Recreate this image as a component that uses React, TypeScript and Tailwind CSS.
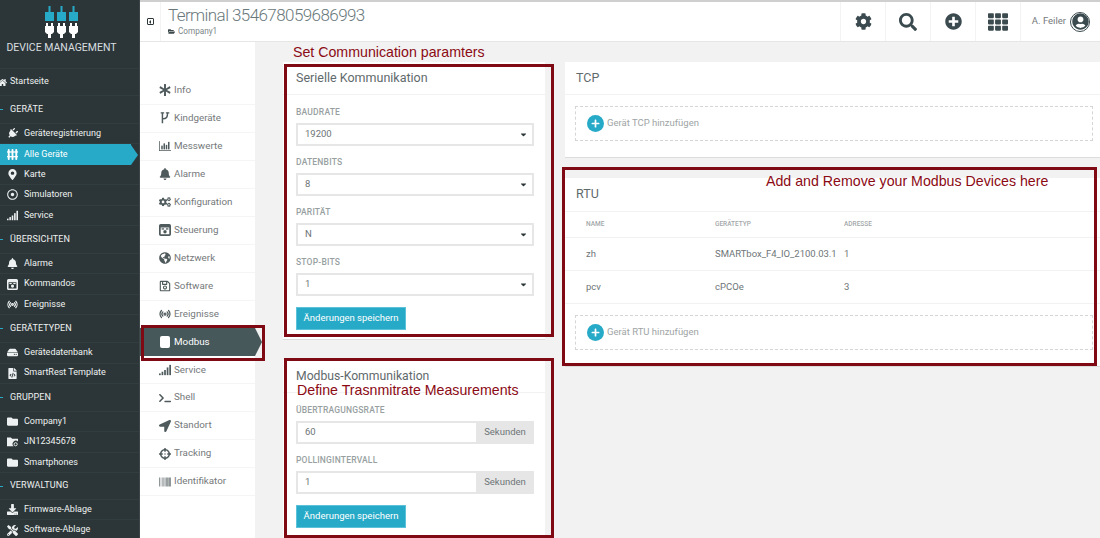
import type { ReactNode } from "react";
import {
  FaAsterisk,
  FaBarcode,
  FaBell,
  FaCaretDown,
  FaCogs,
  FaCog,
  FaCrosshairs,
  FaDownload,
  FaFileCode,
  FaFolder,
  FaFolderOpen,
  FaGlobeAmericas,
  FaHdd,
  FaHome,
  FaLocationArrow,
  FaMapMarkerAlt,
  FaPlug,
  FaPlus,
  FaPlusCircle,
  FaRegDotCircle,
  FaRegSave,
  FaSearch,
  FaTerminal,
  FaTh,
  FaTools,
  FaUserCircle,
} from "react-icons/fa";
import { Radio } from "lucide-react";

const font = "font-['Roboto','Liberation_Sans',sans-serif]";

function Signal({ className }: { className?: string }) {
  return (
    <svg viewBox="0 0 14 12" className={className} fill="currentColor">
      <rect x="0" y="10" width="2" height="2" />
      <rect x="3" y="8" width="2" height="4" />
      <rect x="6" y="6" width="2" height="6" />
      <rect x="9" y="3" width="2" height="9" />
      <rect x="12" y="0" width="2" height="12" />
    </svg>
  );
}

function Control({ className }: { className?: string }) {
  return (
    <svg viewBox="0 0 14 14" className={className} fill="currentColor">
      <path d="M2 0h10a2 2 0 0 1 2 2v10a2 2 0 0 1-2 2H2a2 2 0 0 1-2-2V2a2 2 0 0 1 2-2zm0 4v8h10V4z" fillRule="evenodd" />
      <circle cx="7" cy="9" r="2" />
      <rect x="3" y="5" width="3" height="1.5" />
      <rect x="8" y="5" width="3" height="1.5" />
    </svg>
  );
}

function Grid({ className }: { className?: string }) {
  return (
    <svg viewBox="0 0 14 14" className={className} fill="currentColor">
      <rect x="0" y="3" width="14" height="1.6" />
      <rect x="0" y="9" width="14" height="1.6" />
      <rect x="1" y="0" width="2.4" height="14" rx="1" />
      <rect x="5.8" y="0" width="2.4" height="14" rx="1" />
      <rect x="10.6" y="0" width="2.4" height="14" rx="1" />
    </svg>
  );
}

function Fork({ className }: { className?: string }) {
  return (
    <svg viewBox="0 0 12 14" className={className} fill="none" stroke="currentColor" strokeWidth="1.7">
      <path d="M3 1v12M3 8c5 0 6-2 6-7" />
      <path d="M1 1h4M7 1h4" />
    </svg>
  );
}

function Bars({ className }: { className?: string }) {
  return (
    <svg viewBox="0 0 16 13" className={className} fill="currentColor">
      <rect x="0" y="0" width="1" height="13" />
      <rect x="0" y="12" width="16" height="1" />
      <rect x="3" y="6" width="2" height="5" />
      <rect x="6" y="3" width="2" height="8" />
      <rect x="9" y="5" width="2" height="6" />
      <rect x="12" y="1" width="2" height="10" />
    </svg>
  );
}

function GearFolder({ className }: { className?: string }) {
  return (
    <svg viewBox="0 0 14 12" className={className} fill="currentColor">
      <path d="M0 1h5l1.5 1.5H14V6a4 4 0 0 0-5.5 6H0z" />
      <circle cx="11" cy="9.5" r="2" fill="none" stroke="currentColor" strokeWidth="1.2" />
    </svg>
  );
}

function Logo() {
  const plug = (x: number) => (
    <g key={x}>
      <rect x={x + 3.5} y="0" width="2" height="6" fill="#27aac7" />
      <rect x={x} y="6" width="9" height="9" fill="#27aac7" />
      <rect x={x + 1} y="17" width="2" height="3" fill="#fff" />
      <rect x={x + 6} y="17" width="2" height="3" fill="#fff" />
      <path d={`M${x} 20h9v6l-2 2h-1v4h-3v-4h-1l-2-2z`} fill="#fff" />
    </g>
  );
  return (
    <svg viewBox="0 0 33 32" className="w-[33px] h-[32px]">
      {[0, 12, 24].map(plug)}
    </svg>
  );
}

const sideIcon = "w-[11px] h-[11px]";

type SideItem = { label: string; icon: ReactNode; active?: boolean };

const sections: { title: string; cls: string; items: SideItem[] }[] = [
  {
    title: "GERÄTE",
    cls: "h-[28px]",
    items: [
      { label: "Geräteregistrierung", icon: <FaPlug className="w-[11px] h-[11px] rotate-45" /> },
      { label: "Alle Geräte", icon: <Grid className={sideIcon} />, active: true },
      { label: "Karte", icon: <FaMapMarkerAlt className={sideIcon} /> },
      { label: "Simulatoren", icon: <FaRegDotCircle className={sideIcon} /> },
      { label: "Service", icon: <Signal className={sideIcon} /> },
    ],
  },
  {
    title: "ÜBERSICHTEN",
    cls: "h-[28px]",
    items: [
      { label: "Alarme", icon: <FaBell className={sideIcon} /> },
      { label: "Kommandos", icon: <Control className={sideIcon} /> },
      { label: "Ereignisse", icon: <Radio className={sideIcon} strokeWidth={2.5} /> },
    ],
  },
  {
    title: "GERÄTETYPEN",
    cls: "h-[28px]",
    items: [
      { label: "Gerätedatenbank", icon: <FaHdd className={sideIcon} /> },
      { label: "SmartRest Template", icon: <FaFileCode className={sideIcon} /> },
    ],
  },
  {
    title: "GRUPPEN",
    cls: "h-[28px]",
    items: [
      { label: "Company1", icon: <FaFolder className={sideIcon} /> },
      { label: "JN12345678", icon: <GearFolder className={sideIcon} /> },
      { label: "Smartphones", icon: <FaFolder className={sideIcon} /> },
    ],
  },
  {
    title: "VERWALTUNG",
    cls: "h-[27px]",
    items: [
      { label: "Firmware-Ablage", icon: <FaDownload className={sideIcon} /> },
      { label: "Software-Ablage", icon: <FaTools className={sideIcon} /> },
    ],
  },
];

function Sidebar() {
  return (
    <aside className="w-[140px] h-full shrink-0 bg-[#2c3638] text-[#eef1f1] overflow-hidden border-r border-[#3c4647]">
      <div className="h-[68px] flex flex-col items-center pt-[6px] pr-[16px]">
        <Logo />
        <div className="mt-[3px] text-[10.5px] leading-[14px] text-[#d9dfe0] whitespace-nowrap">DEVICE MANAGEMENT</div>
      </div>
      <div className="h-[28px] flex items-center gap-[3px] text-[9px] border-y border-[#323d3f]">
        <FaHome className="w-[9px] h-[9px] -ml-[2px] shrink-0" />
        <span>Startseite</span>
      </div>
      {sections.map((s) => (
        <div key={s.title}>
          <div className={`${s.cls} flex items-center text-[9px] tracking-[0.1px] pl-[10px] relative border-b border-[#323d3f]`}>
            <span className="absolute left-0 w-[3px] h-[1px] bg-[#27aac7]" />
            {s.title}
          </div>
          {s.items.map((item) =>
            item.active ? (
              <div key={item.label} className="h-[20.4px] flex items-center">
                <div className="h-full flex-1 bg-[#27aac7] flex items-center pl-[7px] text-white text-[9px]">
                  <span className="w-[17px] shrink-0">{item.icon}</span>
                  {item.label}
                </div>
                <div className="w-0 h-0 border-y-[10.2px] border-y-transparent border-l-[7px] border-l-[#27aac7] mr-[1px]" />
              </div>
            ) : (
              <div key={item.label} className="h-[20.4px] flex items-center pl-[7px] text-[9px] border-b border-[#323d3f]">
                <span className="w-[17px] shrink-0">{item.icon}</span>
                {item.label}
              </div>
            ),
          )}
        </div>
      ))}
    </aside>
  );
}

const subIcon = "w-[12px] h-[12px]";

const subNav: { label: string; icon: ReactNode; active?: boolean }[] = [
  { label: "Info", icon: <FaAsterisk className={subIcon} /> },
  { label: "Kindgeräte", icon: <Fork className={subIcon} /> },
  { label: "Messwerte", icon: <Bars className={subIcon} /> },
  { label: "Alarme", icon: <FaBell className={subIcon} /> },
  { label: "Konfiguration", icon: <FaCogs className={subIcon} /> },
  { label: "Steuerung", icon: <Control className={subIcon} /> },
  { label: "Netzwerk", icon: <FaGlobeAmericas className={subIcon} /> },
  { label: "Software", icon: <FaRegSave className={subIcon} /> },
  { label: "Ereignisse", icon: <Radio className={subIcon} strokeWidth={2.5} /> },
  { label: "Modbus", icon: <span className="block w-[10px] h-[12px] ml-[1px] rounded-[2px] bg-white" />, active: true },
  { label: "Service", icon: <Signal className={subIcon} /> },
  { label: "Shell", icon: <FaTerminal className={subIcon} /> },
  { label: "Standort", icon: <FaLocationArrow className={subIcon} /> },
  { label: "Tracking", icon: <FaCrosshairs className={subIcon} /> },
  { label: "Identifikator", icon: <FaBarcode className={subIcon} /> },
];

function SubNav() {
  return (
    <nav className="w-[115px] shrink-0 bg-white pt-[35px] relative">
      {subNav.map((item) =>
        item.active ? (
          <div key={item.label} className="h-[27.95px] flex items-center">
            <div className="h-full flex-1 bg-[#47585b] flex items-center pl-[19px] text-white text-[9.8px]">
              <span className="w-[15px] shrink-0">{item.icon}</span>
              {item.label}
            </div>
            <div className="w-0 h-0 border-y-[14px] border-y-transparent border-l-[7px] border-l-[#47585b] -mr-[7px] z-10" />
          </div>
        ) : (
          <div key={item.label} className="h-[27.95px] flex items-center pl-[19px] text-[9.8px] text-[#75797b] border-b border-[#f5f5f5]">
            <span className="w-[15px] shrink-0 text-[#4f5a5c]">{item.icon}</span>
            {item.label}
          </div>
        ),
      )}
    </nav>
  );
}

function TopBar() {
  return (
    <header className="h-[42px] shrink-0 bg-white border-t-2 border-[#cfcfcf] border-b border-b-[#e6e6e6] flex items-stretch">
      <div className="w-[21px] flex items-center justify-center border-r border-[#f3f3f3]">
        <span className="w-[7px] h-[7px] border-[1.5px] border-[#2c3638] rounded-[1px] flex items-center justify-center">
          <span className="w-0 h-0 border-y-[2px] border-y-transparent border-r-[2px] border-r-[#2c3638]" />
        </span>
      </div>
      <div className="flex-1 pl-[7px] pt-[2px]">
        <div className="text-[17px] leading-[22px] font-light text-[#69787b] tracking-[-0.58px]">Terminal 354678059686993</div>
        <div className="mt-[1px] flex items-center gap-[3px] text-[8.2px] leading-[9px] text-[#7c8688]">
          <FaFolderOpen className="w-[7px] h-[7px] text-[#3d484a]" />
          Company1
        </div>
      </div>
      {[
        <FaCog key="cog" className="w-[17px] h-[17px]" />,
        <FaSearch key="search" className="w-[18px] h-[18px]" />,
        <FaPlusCircle key="plus" className="w-[17px] h-[17px]" />,
        <FaTh key="grid" className="w-[20px] h-[20px]" />,
      ].map((icon) => (
        <div key={icon.key} className="w-[45px] flex items-center justify-center border-l border-[#f3f3f3] text-[#3b4a4e]">
          {icon}
        </div>
      ))}
      <div className="w-[80px] flex items-center justify-end gap-[4px] pr-[10px] border-l border-[#f3f3f3] text-[9.5px] text-[#75797b]">
        A. Feiler
        <span className="w-[20px] h-[20px] rounded-full border-[1.5px] border-[#3b4a4e] flex items-center justify-center overflow-hidden">
          <FaUserCircle className="w-[17px] h-[17px] text-[#3b4a4e]" />
        </span>
      </div>
    </header>
  );
}

function Label({ children }: { children: ReactNode }) {
  return <div className="h-[11px] leading-[11px] text-[8.5px] font-medium text-[#989fa1] tracking-[0.2px]">{children}</div>;
}

function SelectField({ label, value }: { label: string; value: string }) {
  return (
    <div className="mb-[11px]">
      <Label>{label}</Label>
      <div className="mt-[5px] h-[23px] border-2 border-[#e6e6e6] bg-white flex items-center justify-between pl-[7px] pr-[4px] text-[9.5px] text-[#6e7577]">
        {value}
        <FaCaretDown className="w-[9px] h-[9px] text-[#2c3638]" />
      </div>
    </div>
  );
}

function InputField({ label, value }: { label: string; value: string }) {
  return (
    <div className="mb-[11px]">
      <Label>{label}</Label>
      <div className="mt-[5px] h-[23px] flex text-[9.5px] text-[#6e7577]">
        <div className="flex-1 border-2 border-r-0 border-[#e6e6e6] bg-white flex items-center pl-[7px]">{value}</div>
        <div className="w-[58px] bg-[#e6e6e6] flex items-center justify-center">Sekunden</div>
      </div>
    </div>
  );
}

function SaveButton() {
  return (
    <button className="block w-[110px] h-[23px] bg-[#27aac7] text-white text-[9.5px] border border-[#5cc2d9]">Änderungen speichern</button>
  );
}

function AddDevice({ label }: { label: string }) {
  return (
    <div className="h-[35px] border border-dashed border-[#d5d5d5] flex items-center pl-[11px] gap-[3px] text-[9.5px] text-[#9ea4a5]">
      <span className="w-[17px] h-[17px] rounded-full bg-[#27aac7] flex items-center justify-center">
        <FaPlus className="w-[9px] h-[9px] text-white" />
      </span>
      {label}
    </div>
  );
}

const rows = [
  ["zh", "SMARTbox_F4_IO_2100.03.1", "1"],
  ["pcv", "cPCOe", "3"],
];

export default function App() {
  return (
    <div className={`${font} relative w-[1100px] h-[538px] overflow-hidden flex bg-[#f2f2f2]`}>
      <Sidebar />
      <div className="flex-1 flex flex-col min-w-0">
        <TopBar />
        <div className="flex-1 flex min-h-0">
          <SubNav />
          <main className="flex-1 flex gap-[20px] pl-[28px] pt-[20px] min-w-0">
            <div className="w-[262px] shrink-0 flex flex-col gap-[20px]">
              <section className="h-[278px] bg-white border-b border-[#dcdcdc]">
                <h2 className="h-[33px] flex items-center px-[13px] text-[12.5px] text-[#5f6a6c] border-b border-[#f2f2f2]">Serielle Kommunikation</h2>
                <div className="pl-[13px] pr-[11px] pt-[12px]">
                  <SelectField label="BAUDRATE" value="19200" />
                  <SelectField label="DATENBITS" value="8" />
                  <SelectField label="PARITÄT" value="N" />
                  <SelectField label="STOP-BITS" value="1" />
                  <SaveButton />
                </div>
              </section>
              <section className="flex-1 bg-white">
                <h2 className="h-[33px] flex items-center px-[13px] text-[12.2px] text-[#5f6a6c] border-b border-[#f2f2f2]">Modbus-Kommunikation</h2>
                <div className="pl-[13px] pr-[11px] pt-[12px]">
                  <InputField label="ÜBERTRAGUNGSRATE" value="60" />
                  <InputField label="POLLINGINTERVALL" value="1" />
                  <SaveButton />
                </div>
              </section>
            </div>
            <div className="flex-1 flex flex-col gap-[20px] min-w-0">
              <section className="h-[96px] bg-white border-b border-[#dcdcdc]">
                <h2 className="h-[33px] flex items-center px-[11px] text-[12.5px] text-[#5f6a6c] border-b border-[#f2f2f2]">TCP</h2>
                <div className="pl-[10px] pr-[7px] pt-[11px]">
                  <AddDevice label="Gerät TCP hinzufügen" />
                </div>
              </section>
              <section className="h-[189px] bg-white border-b border-[#dcdcdc]">
                <h2 className="h-[34px] flex items-center px-[11px] text-[12.5px] text-[#5f6a6c] border-b border-[#f2f2f2]">RTU</h2>
                <div className="h-[26px] pt-[1px] grid grid-cols-[129px_129px_1fr] items-center pl-[21px] text-[6.5px] font-medium text-[#a3a8a9] border-b border-[#f2f2f2]">
                  <span>NAME</span>
                  <span>GERÄTETYP</span>
                  <span>ADRESSE</span>
                </div>
                {rows.map((r) => (
                  <div key={r[0]} className="h-[33px] grid grid-cols-[129px_129px_1fr] items-center pl-[21px] text-[9.5px] text-[#6e7577] border-b border-[#f2f2f2]">
                    <span>{r[0]}</span>
                    <span>{r[1]}</span>
                    <span>{r[2]}</span>
                  </div>
                ))}
                <div className="pl-[10px] pr-[7px] pt-[11px]">
                  <AddDevice label="Gerät RTU hinzufügen" />
                </div>
              </section>
            </div>
          </main>
        </div>
      </div>

      {/* annotations painted over the screenshot */}
      <div className="absolute left-[141px] top-[325px] w-[124px] h-[36px] border-[3px] border-[#7f0a14]" />
      <div className="absolute left-[284px] top-[64px] w-[270px] h-[273px] border-[3px] border-[#7f0a14]" />
      <div className="absolute left-[284px] top-[358px] w-[270px] h-[180px] border-[3px] border-[#7f0a14]" />
      <div className="absolute left-[562px] top-[167px] w-[535px] h-[199px] border-[3px] border-[#7f0a14]" />
      <p className="absolute left-[293px] top-[44px] font-['Liberation_Sans',sans-serif] text-[14.2px] leading-[16px] text-[#8b0a14] whitespace-nowrap">Set Communication paramters</p>
      <p className="absolute left-[297px] top-[382px] font-['Liberation_Sans',sans-serif] text-[14.2px] leading-[16px] text-[#8b0a14] whitespace-nowrap">Define Trasnmitrate Measurements</p>
      <p className="absolute left-[766px] top-[173px] font-['Liberation_Sans',sans-serif] text-[14.2px] leading-[16px] text-[#8b0a14] whitespace-nowrap">Add and Remove your Modbus Devices here</p>
    </div>
  );
}
